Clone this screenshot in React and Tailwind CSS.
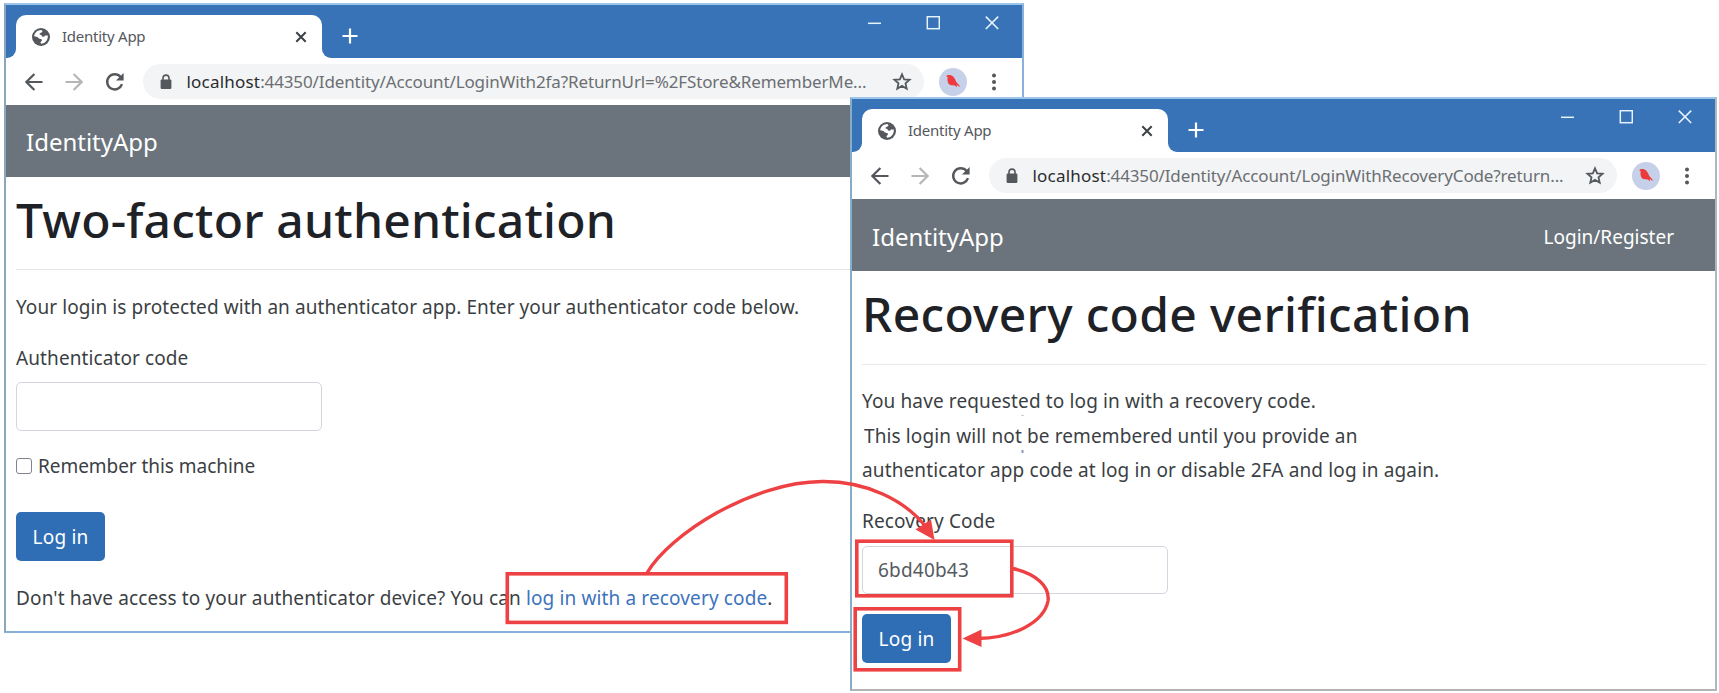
import React from 'react';

const Globe = () => (
  <svg width="18" height="18" viewBox="0 0 18 18" className="mt-[2px] shrink-0">
    <circle cx="9" cy="9" r="9" fill="#54585c" />
    <path
      d="M2.2 8.2C2.6 4.8 5.4 2.2 9.4 2.1L10.6 3.2 9.6 4.6 7.8 5.2 7.6 6.6 9.4 7 10 8.4 12 8.8 13 7.4 15.8 7.6C16.2 10.4 14.8 13.4 12.2 14.9L9.2 15.8 8.4 14.2 10 12.6 9.6 11.2 7 10.6 5.4 9z"
      fill="#fff"
    />
  </svg>
);

const CloseX = () => (
  <svg width="12" height="12" viewBox="0 0 12 12" className="shrink-0" fill="none" stroke="#3c4043" strokeWidth="2">
    <path d="M1.3 1.3 10.7 10.7M10.7 1.3 1.3 10.7" />
  </svg>
);

const WindowButtons = () => (
  <div className="mt-[11px] mr-[23px] ml-auto flex h-[14px] gap-[45px]">
    <svg width="14" height="14" viewBox="0 0 14 14" fill="none" stroke="#e6f3fd" strokeWidth="1.5">
      <path d="M1 7.3h13" />
    </svg>
    <svg width="14" height="14" viewBox="0 0 14 14" fill="none" stroke="#e6f3fd" strokeWidth="1.5">
      <rect x="1.3" y=".7" width="12" height="12" />
    </svg>
    <svg width="14" height="14" viewBox="0 0 14 14" fill="none" stroke="#e6f3fd" strokeWidth="1.6">
      <path d="M.8.6 13.2 13M13.2.6.8 13" />
    </svg>
  </div>
);

function TitleBar() {
  return (
    <div className="flex h-[53px] bg-white">
      <div className="w-[10px] rounded-br-[9px] bg-[#3873b7]" />
      <div className="w-[306px] bg-[#3873b7] pt-[10px]">
        <div className="flex h-full items-start rounded-t-[10px] bg-white pt-[11px] pr-[15px] pl-[16px]">
          <Globe />
          <span className="ml-[12px] text-[15px] leading-[21px] tracking-[-0.25px] text-[#54585d]">Identity App</span>
          <span className="mt-[5px] ml-auto">
            <CloseX />
          </span>
        </div>
      </div>
      <div className="flex flex-1 rounded-bl-[9px] bg-[#3873b7]">
        <svg width="16" height="16" viewBox="0 0 16 16" className="mt-[23px] ml-[20px]" stroke="#fff" strokeWidth="2.2">
          <path d="M8 .5v15M.5 8h15" />
        </svg>
        <WindowButtons />
      </div>
    </div>
  );
}

const Arrow = ({ className, color, flip }) => (
  <svg width="18" height="18" viewBox="0 0 18 18" className={className} fill="none" stroke={color} strokeWidth="2.2">
    <path d={flip ? 'M.5 9h15.5M8.6 1l8 8-8 8' : 'M17.5 9H2M9.4 1l-8 8 8 8'} />
  </svg>
);

function Toolbar({ url, urlClass }) {
  return (
    <div className="flex h-[47px] items-center bg-white pr-[26px] pl-[19px]">
      <Arrow color="#54575b" className="shrink-0" />
      <Arrow flip color="#b4b6b8" className="ml-[22px] shrink-0" />
      <svg width="20" height="20" viewBox="0 0 20 20" className="ml-[22px] shrink-0" fill="none" stroke="#54575b" strokeWidth="2.4">
        <path d="M17 12.2A7.6 7.6 0 1 1 15.6 4.9" />
        <path d="M18.6 1v7.6H11z" fill="#54575b" stroke="none" />
      </svg>
      <div className="ml-[18px] flex h-[35px] flex-1 items-center rounded-full bg-[#f3f4f5] pr-[12px] pl-[17px]">
        <svg width="12" height="16" viewBox="0 0 12 16" className="shrink-0">
          <rect x=".6" y="5.6" width="10.8" height="9.4" rx="1.2" fill="#54575b" />
          <path d="M3 6.2V4.1a3 3 0 0 1 6 0v2.1" fill="none" stroke="#54575b" strokeWidth="1.6" />
        </svg>
        <span className="ml-[14.5px] text-[17px] leading-[34px] whitespace-pre text-[#2a2c2f]">
          <span className="tracking-[0.2px]">localhost</span>
          <span className={urlClass}>{url}</span>
        </span>
        <svg width="20" height="20" viewBox="0 0 20 20" className="ml-auto shrink-0" fill="none" stroke="#54575b" strokeWidth="1.8">
          <path d="M10 2.3l2.15 5 5.45.5-4.1 3.6 1.2 5.3L10 13.9l-4.7 2.8 1.2-5.3-4.1-3.6 5.45-.5z" />
        </svg>
      </div>
      <svg width="28" height="28" viewBox="0 0 28 28" className="ml-[15px] shrink-0">
        <circle cx="14" cy="14" r="14" fill="#c6d0e8" />
        <path d="M7 8.3l1.8-1.2 2.6-.2 2.5 1.3 1.9 2.5 1.5 3.2 4 4.6-1.8-.3-1.8-1.4.3 2.5-2.2-1.8-4.9-.6-1.8-1.9-.7-3.3.3-2.7z" fill="#ee3a3c" />
      </svg>
      <svg width="4" height="18" viewBox="0 0 4 18" className="ml-[25px] shrink-0" fill="#54575b">
        <circle cx="2" cy="2.6" r="2" />
        <circle cx="2" cy="9" r="2" />
        <circle cx="2" cy="15.4" r="2" />
      </svg>
    </div>
  );
}

const NavBar = ({ link, className }) => (
  <div className={`flex items-center justify-between bg-[#6b747c] pt-[3px] pr-[41px] pl-[19px] text-white ${className}`}>
    <span className="pl-[1px] text-[24px] leading-[30px]">IdentityApp</span>
    {link && <span className="text-[19px] leading-[30px]">{link}</span>}
  </div>
);

const Button = () => (
  <button className="flex h-[48.5px] w-[89px] items-center justify-center rounded-[5px] bg-[#2f6eb5] pt-[2px] text-[19px] tracking-[0.2px] text-white">
    Log in
  </button>
);

export default function App() {
  return (
    <div className="relative h-[693px] w-[1719px] overflow-hidden bg-white font-['Noto_Sans',sans-serif] text-[19px] leading-[30px] text-[#3b3f44]">
      <section className="absolute top-[3px] left-[4px] h-[630px] w-[1020px] border-2 border-t-[#9cc6e9] border-r-[#88b2d9] border-b-[#86b1d8] border-l-[#8ba7bb] bg-white">
        <TitleBar />
        <Toolbar url=":44350/Identity/Account/LoginWith2fa?ReturnUrl=%2FStore&RememberMe..." urlClass="tracking-[-0.12px] text-[#6b6f73]" />
        <NavBar className="h-[71.5px]" />
        <div className="flex flex-col items-start px-[10px] pt-[13.5px]">
          <h1 className="text-[48px] leading-[60px] font-medium tracking-[0.2px] text-[#1e2227]">Two-factor authentication</h1>
          <hr className="mt-[19px] w-full border-[#e4e5e7]" />
          <p className="mt-[21.5px] tracking-[0.07px]">
            Your login is protected with an authenticator app. Enter your authenticator code below.
          </p>
          <label className="mt-[21px] tracking-[0.1px]">Authenticator code</label>
          <div className="mt-[9.5px] h-[48.5px] w-[306px] rounded-[5px] border-[1.5px] border-[#d3d6df]" />
          <label className="mt-[20.5px] flex items-center">
            <span className="size-[16px] rounded-[3px] border-[1.5px] border-[#80838a]" />
            <span className="ml-[6px] tracking-[-0.05px]">Remember this machine</span>
          </label>
          <div className="mt-[31px]">
            <Button />
          </div>
          <p className="mt-[22px] whitespace-pre">
            <span className="tracking-[0.13px]">Don't have access to your authenticator device? You can </span>
            <a className="tracking-[0.13px] text-[#3d73bc]">log in with a recovery code</a>.
          </p>
        </div>
      </section>

      <section className="absolute top-[97px] left-[850px] h-[594px] w-[867px] border-2 border-t-[#9cc6e9] border-r-[#aeb6bf] border-b-[#b2b3b5] border-l-[#86adc9] bg-white">
        <TitleBar />
        <Toolbar url=":44350/Identity/Account/LoginWithRecoveryCode?return..." urlClass="tracking-[-0.13px] text-[#6b6f73]" />
        <NavBar link="Login/Register" className="h-[72px]" />
        <div className="flex flex-col items-start pt-[13px] pr-[9px] pl-[10px]">
          <h1 className="text-[48px] leading-[60px] font-medium tracking-[0.32px] text-[#1e2227]">Recovery code verification</h1>
          <hr className="mt-[20px] w-full border-[#e9eaeb]" />
          <div className="mt-[19px] leading-[34.5px]">
            <p className="tracking-[0.13px]">You have requested to log in with a recovery code.</p>
            <p className="pl-[2px] tracking-[0.12px]">This login will not be remembered until you provide an</p>
            <p className="tracking-[0.13px]">authenticator app code at log in or disable 2FA and log in again.</p>
          </div>
          <label className="mt-[18px] tracking-[0.15px]">Recovery Code</label>
          <div className="mt-[10px] flex h-[48.5px] w-[306px] items-center rounded-[5px] border-[1.5px] border-[#d3d6df] pt-[1px] pl-[15px] tracking-[0.2px] text-[#555b62]">
            6bd40b43
          </div>
          <div className="mt-[20px]">
            <Button />
          </div>
        </div>
      </section>

      <svg className="absolute top-0 left-0" width="1719" height="693" viewBox="0 0 1719 693" fill="none">
        <g fill="#8a9bb0">
          <rect x="1021.5" y="415" width="2" height="1" opacity=".7" />
          <rect x="1021.5" y="450" width="2" height="3" />
        </g>
        <g stroke="#ee4144" strokeWidth="3.6">
          <rect x="507.3" y="573.8" width="279" height="48.6" />
          <rect x="856.8" y="541.2" width="155" height="54.6" />
          <rect x="855.2" y="608.8" width="104.5" height="61" />
          <path d="M647 573C670 534 752 482 822 481.5C866 481 905 500 926 527" strokeWidth="3.4" />
          <path d="M1013 568.5C1036 574 1050 586 1048 601C1044 622 1014 638 978 638.5" strokeWidth="3.4" />
        </g>
        <g fill="#ee4144">
          <path d="M934.5 540 915.5 529.5 931 519.5z" />
          <path d="M962.5 638.5 981.5 629.5 981.5 647z" />
        </g>
      </svg>
    </div>
  );
}
